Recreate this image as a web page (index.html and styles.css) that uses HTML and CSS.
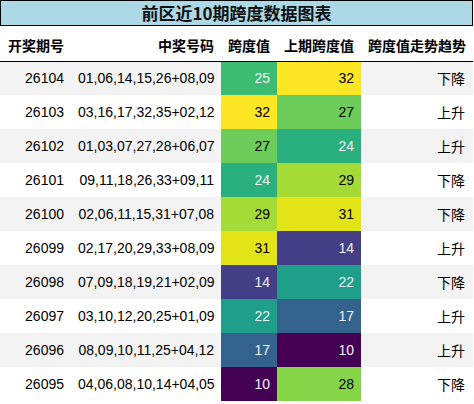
FILE: index.html
```html
<!DOCTYPE html>
<html lang="zh">
  <head>
    <meta charset="UTF-8" />
    <meta name="viewport" content="width=device-width, initial-scale=1.0" />
    <title>前区近10期跨度数据图表</title>
    <link rel="stylesheet" href="styles.css">
  </head>
  <body>
    <div class="span-table">
      <!-- Title -->
      <div class="table-title">前区近10期跨度数据图表</div>

      <table>
        <colgroup>
          <col class="col-issue" />
          <col class="col-numbers" />
          <col class="col-span" />
          <col class="col-prev" />
          <col class="col-trend" />
        </colgroup>
        <thead>
          <tr>
            <th class="left">开奖期号</th>
            <th>中奖号码</th>
            <th>跨度值</th>
            <th>上期跨度值</th>
            <th>跨度值走势趋势</th>
          </tr>
        </thead>
        <tbody>
          <tr>
            <td>26104</td><td>01,06,14,15,26+08,09</td>
            <td class="light" style="background-color: #3dbc74">25</td>
            <td style="background-color: #fde725">32</td>
            <td class="cjk">下降</td>
          </tr>
          <tr>
            <td>26103</td><td>03,16,17,32,35+02,12</td>
            <td style="background-color: #fde725">32</td>
            <td style="background-color: #6ccd5a">27</td>
            <td class="cjk">上升</td>
          </tr>
          <tr>
            <td>26102</td><td>01,03,07,27,28+06,07</td>
            <td style="background-color: #6ccd5a">27</td>
            <td class="light" style="background-color: #2ab07f">24</td>
            <td class="cjk">上升</td>
          </tr>
          <tr>
            <td>26101</td><td>09,11,18,26,33+09,11</td>
            <td class="light" style="background-color: #2ab07f">24</td>
            <td style="background-color: #a5db36">29</td>
            <td class="cjk">下降</td>
          </tr>
          <tr>
            <td>26100</td><td>02,06,11,15,31+07,08</td>
            <td style="background-color: #a5db36">29</td>
            <td style="background-color: #e2e418">31</td>
            <td class="cjk">下降</td>
          </tr>
          <tr>
            <td>26099</td><td>02,17,20,29,33+08,09</td>
            <td style="background-color: #e2e418">31</td>
            <td class="light" style="background-color: #433e85">14</td>
            <td class="cjk">上升</td>
          </tr>
          <tr>
            <td>26098</td><td>07,09,18,19,21+02,09</td>
            <td class="light" style="background-color: #433e85">14</td>
            <td class="light" style="background-color: #1f9e89">22</td>
            <td class="cjk">下降</td>
          </tr>
          <tr>
            <td>26097</td><td>03,10,12,20,25+01,09</td>
            <td class="light" style="background-color: #1f9e89">22</td>
            <td class="light" style="background-color: #33638d">17</td>
            <td class="cjk">上升</td>
          </tr>
          <tr>
            <td>26096</td><td>08,09,10,11,25+04,12</td>
            <td class="light" style="background-color: #33638d">17</td>
            <td class="light" style="background-color: #440154">10</td>
            <td class="cjk">上升</td>
          </tr>
          <tr>
            <td>26095</td><td>04,06,08,10,14+04,05</td>
            <td class="light" style="background-color: #440154">10</td>
            <td style="background-color: #86d549">28</td>
            <td class="cjk">下降</td>
          </tr>
        </tbody>
      </table>
    </div>
  </body>
</html>
```

FILE: styles.css
```css
/* Page */
body {
  margin: 0;
  padding: 0;
  background-color: white;
  font-family: "Liberation Sans", "Noto Sans CJK SC", sans-serif;
  color: #000;
}

.span-table {
  width: 473px;
}

/* Title bar */
.table-title {
  height: 24px;
  line-height: 24px;
  border: 1px solid #000;
  background-color: #add8e6;
  text-align: center;
  font-family: "Noto Sans CJK SC", sans-serif;
  font-size: 17px;
  font-weight: bold;
  color: #111;
}

/* Table */
table {
  width: 473px;
  border-collapse: collapse;
  table-layout: fixed;
}

.col-issue { width: 71px; }
.col-numbers { width: 150px; }
.col-span { width: 56px; }
.col-prev { width: 84px; }
.col-trend { width: 112px; }

th {
  height: 35px;
  padding: 4px 7px 0 7px;
  box-sizing: border-box;
  font-family: "Noto Sans CJK SC", sans-serif;
  font-size: 14px;
  font-weight: bold;
  text-align: right;
  white-space: nowrap;
  border-bottom: 1px solid #000;
}

th.left {
  text-align: left;
  padding-left: 8px;
}

td {
  height: 34px;
  padding: 0 7px;
  box-sizing: border-box;
  font-size: 14px;
  text-align: right;
  white-space: nowrap;
}

tbody tr:nth-child(odd) {
  background-color: #f3f3f3;
}

/* Dark gradient cells get light text */
td.light {
  color: #f1f1f1;
}

td.cjk {
  font-family: "Noto Sans CJK SC", sans-serif;
  padding-right: 8px;
}
```
